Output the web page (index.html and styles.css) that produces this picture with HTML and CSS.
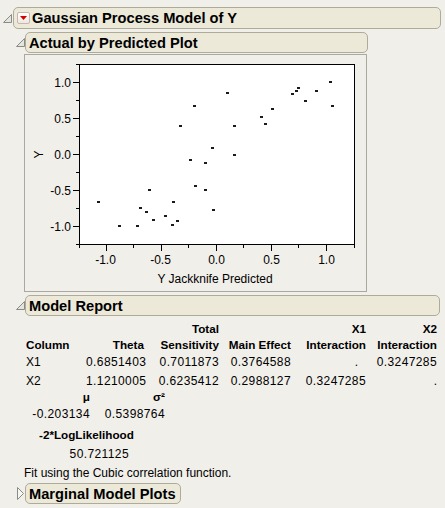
FILE: index.html
```html
<!DOCTYPE html>
<html>
<head>
<meta charset="utf-8">
<link rel="stylesheet" href="styles.css">
</head>
<body>
<div class="report">
  <div class="ohead top">
    <svg class="disc" width="9" height="9" viewBox="0 0 9 9"><polygon points="0.5,8.5 8.5,8.5 8.5,0.5" class="tri"/></svg>
    <div class="hbox mainbox">
      <span class="redbtn"><svg width="11" height="10" viewBox="0 0 11 10"><polygon points="2,3 9,3 5.5,7" class="redtri"/></svg></span>
      <span class="htitle">Gaussian Process Model of Y</span>
    </div>
  </div>
  <div class="children">
    <div class="ohead sec">
      <svg class="disc" width="9" height="9" viewBox="0 0 9 9"><polygon points="0.5,8.5 8.5,8.5 8.5,0.5" class="tri"/></svg>
      <div class="hbox plotbox">Actual by Predicted Plot</div>
    </div>
    <div class="panel">
      <svg class="chart" width="341" height="236" viewBox="0 0 341 236">
        <g transform="translate(-25,-54)">
          <rect x="79.5" y="63.5" width="275" height="180" class="frame"/>
          <g class="ticks">
            <line x1="73" y1="81.5" x2="79" y2="81.5"/>
            <line x1="73" y1="117.5" x2="79" y2="117.5"/>
            <line x1="73" y1="153.5" x2="79" y2="153.5"/>
            <line x1="73" y1="189.5" x2="79" y2="189.5"/>
            <line x1="73" y1="225.5" x2="79" y2="225.5"/>
            <line x1="76" y1="63.5" x2="79" y2="63.5"/>
            <line x1="76" y1="99.5" x2="79" y2="99.5"/>
            <line x1="76" y1="135.5" x2="79" y2="135.5"/>
            <line x1="76" y1="171.5" x2="79" y2="171.5"/>
            <line x1="76" y1="207.5" x2="79" y2="207.5"/>
            <line x1="76" y1="243.5" x2="79" y2="243.5"/>
            <line x1="106.5" y1="244" x2="106.5" y2="250"/>
            <line x1="161.5" y1="244" x2="161.5" y2="250"/>
            <line x1="216.5" y1="244" x2="216.5" y2="250"/>
            <line x1="271.5" y1="244" x2="271.5" y2="250"/>
            <line x1="326.5" y1="244" x2="326.5" y2="250"/>
            <line x1="79.5" y1="244" x2="79.5" y2="247"/>
            <line x1="133.5" y1="244" x2="133.5" y2="247"/>
            <line x1="188.5" y1="244" x2="188.5" y2="247"/>
            <line x1="243.5" y1="244" x2="243.5" y2="247"/>
            <line x1="298.5" y1="244" x2="298.5" y2="247"/>
            <line x1="354.5" y1="244" x2="354.5" y2="247"/>
          </g>
          <g class="lbl ylbl">
            <text x="71" y="86">1.0</text>
            <text x="71" y="122">0.5</text>
            <text x="71" y="158">0.0</text>
            <text x="71" y="194">-0.5</text>
            <text x="71" y="230">-1.0</text>
          </g>
          <g class="lbl xlbl">
            <text x="105.5" y="262.5">-1.0</text>
            <text x="160.5" y="262.5">-0.5</text>
            <text x="216.5" y="262.5">0.0</text>
            <text x="271.5" y="262.5">0.5</text>
            <text x="326.5" y="262.5">1.0</text>
          </g>
          <text class="lbl xlbl" x="215" y="281.5">Y Jackknife Predicted</text>
          <text class="lbl xlbl" transform="translate(42.5,153.5) rotate(-90)">Y</text>
          <g class="pts">
            <rect x="193" y="104" width="3" height="2"/>
            <rect x="179" y="124" width="3" height="2"/>
            <rect x="211" y="146" width="3" height="2"/>
            <rect x="189" y="158" width="3" height="2"/>
            <rect x="204" y="161" width="3" height="2"/>
            <rect x="194" y="184" width="3" height="2"/>
            <rect x="148" y="188" width="3" height="2"/>
            <rect x="204" y="188" width="3" height="2"/>
            <rect x="97" y="200" width="3" height="2"/>
            <rect x="172" y="200" width="3" height="2"/>
            <rect x="139" y="206" width="3" height="2"/>
            <rect x="212" y="208" width="3" height="2"/>
            <rect x="145" y="210" width="3" height="2"/>
            <rect x="164" y="214" width="3" height="2"/>
            <rect x="152" y="218" width="3" height="2"/>
            <rect x="176" y="219" width="3" height="2"/>
            <rect x="171" y="223" width="3" height="2"/>
            <rect x="118" y="224" width="3" height="2"/>
            <rect x="136" y="224" width="3" height="2"/>
            <rect x="329" y="80" width="3" height="2"/>
            <rect x="297" y="86" width="3" height="2"/>
            <rect x="295" y="89" width="3" height="2"/>
            <rect x="315" y="89" width="3" height="2"/>
            <rect x="226" y="91" width="3" height="2"/>
            <rect x="291" y="92" width="3" height="2"/>
            <rect x="304" y="99" width="3" height="2"/>
            <rect x="331" y="104" width="3" height="2"/>
            <rect x="271" y="107" width="3" height="2"/>
            <rect x="260" y="115" width="3" height="2"/>
            <rect x="264" y="122" width="3" height="2"/>
            <rect x="233" y="124" width="3" height="2"/>
            <rect x="233" y="153" width="3" height="2"/>
          </g>
        </g>
      </svg>
    </div>
    <div class="ohead sec2">
      <svg class="disc" width="9" height="9" viewBox="0 0 9 9"><polygon points="0.5,8.5 8.5,8.5 8.5,0.5" class="tri"/></svg>
      <div class="hbox reportbox">Model Report</div>
    </div>
    <div class="mtab">
      <div class="h"></div><div class="h"></div><div class="h r">Total</div><div class="h"></div><div class="h r">X1</div><div class="h r">X2</div>
      <div class="h">Column</div><div class="h r">Theta</div><div class="h r">Sensitivity</div><div class="h r">Main Effect</div><div class="h r">Interaction</div><div class="h r">Interaction</div>
      <div class="d">X1</div><div class="d r num">0.6851403</div><div class="d r num">0.7011873</div><div class="d r num">0.3764588</div><div class="d r dotcell">.</div><div class="d r num">0.3247285</div>
      <div class="d">X2</div><div class="d r num">1.1210005</div><div class="d r num">0.6235412</div><div class="d r num">0.2988127</div><div class="d r num">0.3247285</div><div class="d r">.</div>
    </div>
    <div class="mutab">
      <div class="mh r">μ</div><div class="mh r">σ²</div>
      <div class="d r num">-0.203134</div><div class="d r num">0.5398764</div>
    </div>
    <div class="lltab">
      <div class="h">-2*LogLikelihood</div>
      <div class="d r num llv">50.721125</div>
    </div>
    <div class="note">Fit using the Cubic correlation function.</div>
    <div class="ohead sec3">
      <svg class="disc" width="9" height="13" viewBox="0 0 9 13"><polygon points="1.5,0.5 7.5,6.5 1.5,12.5" class="tri2"/></svg>
      <div class="hbox margbox">Marginal Model Plots</div>
    </div>
  </div>
</div>
</body>
</html>
```
FILE: styles.css
```css
html, body {
  margin: 0;
  padding: 0;
}
body {
  background: #f1efea;
  font-family: "Liberation Sans", Arial, sans-serif;
  color: #000;
  width: 445px;
  height: 508px;
  overflow: hidden;
}
.ohead {
  display: flex;
  align-items: center;
}
.top {
  padding-top: 7px;
}
.top .disc {
  margin-left: 3px;
  margin-right: 1px;
}
.disc {
  flex: none;
  display: block;
}
.tri {
  fill: #e4e4e0;
  stroke: #8a8a86;
  stroke-width: 1;
}
.tri2 {
  fill: #f6f6f4;
  stroke: #8a8a86;
  stroke-width: 1;
}
.hbox {
  box-sizing: border-box;
  border: 1px solid #aeab9b;
  border-radius: 5px;
  background: #ece9d9;
  font-weight: bold;
  font-size: 14.67px;
  display: flex;
  align-items: center;
  padding-left: 3px;
  white-space: nowrap;
  color: #000;
}
.mainbox {
  width: 428px;
  height: 22px;
}
.redbtn {
  box-sizing: border-box;
  width: 13px;
  height: 12px;
  border: 1px solid #c9b5ad;
  border-radius: 2px;
  background: linear-gradient(#ffffff, #ece8e0);
  display: flex;
  align-items: center;
  justify-content: center;
  margin-right: 2px;
}
.redbtn svg {
  display: block;
}
.redtri {
  fill: #d40000;
}
.children {
  padding-left: 16px;
}
.sec {
  margin-top: 3px;
}
.plotbox {
  width: 343px;
  height: 21px;
}
.panel {
  box-sizing: border-box;
  margin-left: 8px;
  margin-top: 1px;
  width: 343px;
  height: 238px;
  border: 1px solid #aaa99f;
}
.chart {
  display: block;
}
.frame {
  fill: #ffffff;
  stroke: #000;
  stroke-width: 1;
}
.ticks line {
  stroke: #000;
  stroke-width: 1;
}
.lbl {
  font-family: "Liberation Sans", Arial, sans-serif;
  font-size: 12px;
  fill: #000;
}
.ylbl {
  text-anchor: end;
}
.xlbl {
  text-anchor: middle;
}
.pts rect {
  fill: #1a1a1a;
}
.sec2 {
  margin-top: 3px;
}
.reportbox {
  width: 415px;
  height: 21px;
}
.mtab {
  display: grid;
  grid-template-columns: 60px 58px 75px 72px 75px 71px;
  margin-left: 10px;
  margin-top: 5px;
}
.h {
  font-weight: bold;
  font-size: 11.7px;
  line-height: 16px;
  white-space: nowrap;
}
.d {
  font-size: 12px;
  line-height: 19px;
  white-space: nowrap;
}
.r {
  text-align: right;
}
.num {
  letter-spacing: 0.4px;
}
.dotcell {
  padding-right: 8px;
}
.mutab {
  display: grid;
  grid-template-columns: 64px 75px;
  margin-left: 10px;
  margin-top: 0;
}
.mh {
  font-weight: bold;
  font-size: 11.7px;
  line-height: 12px;
}
.mutab .d {
  line-height: 16px;
  margin-top: 3px;
}
.lltab {
  margin-left: 23px;
  width: 100px;
  margin-top: 5px;
}
.lltab .d {
  line-height: 16px;
  margin-top: 3px;
}
.llv {
  padding-right: 10px;
}
.note {
  margin-left: 8px;
  margin-top: 3px;
  font-size: 12px;
  line-height: 16px;
}
.sec3 {
  margin-top: 2px;
}
.sec3 .disc {
  margin-top: 0;
}
.margbox {
  width: 156px;
  height: 21px;
}
```
